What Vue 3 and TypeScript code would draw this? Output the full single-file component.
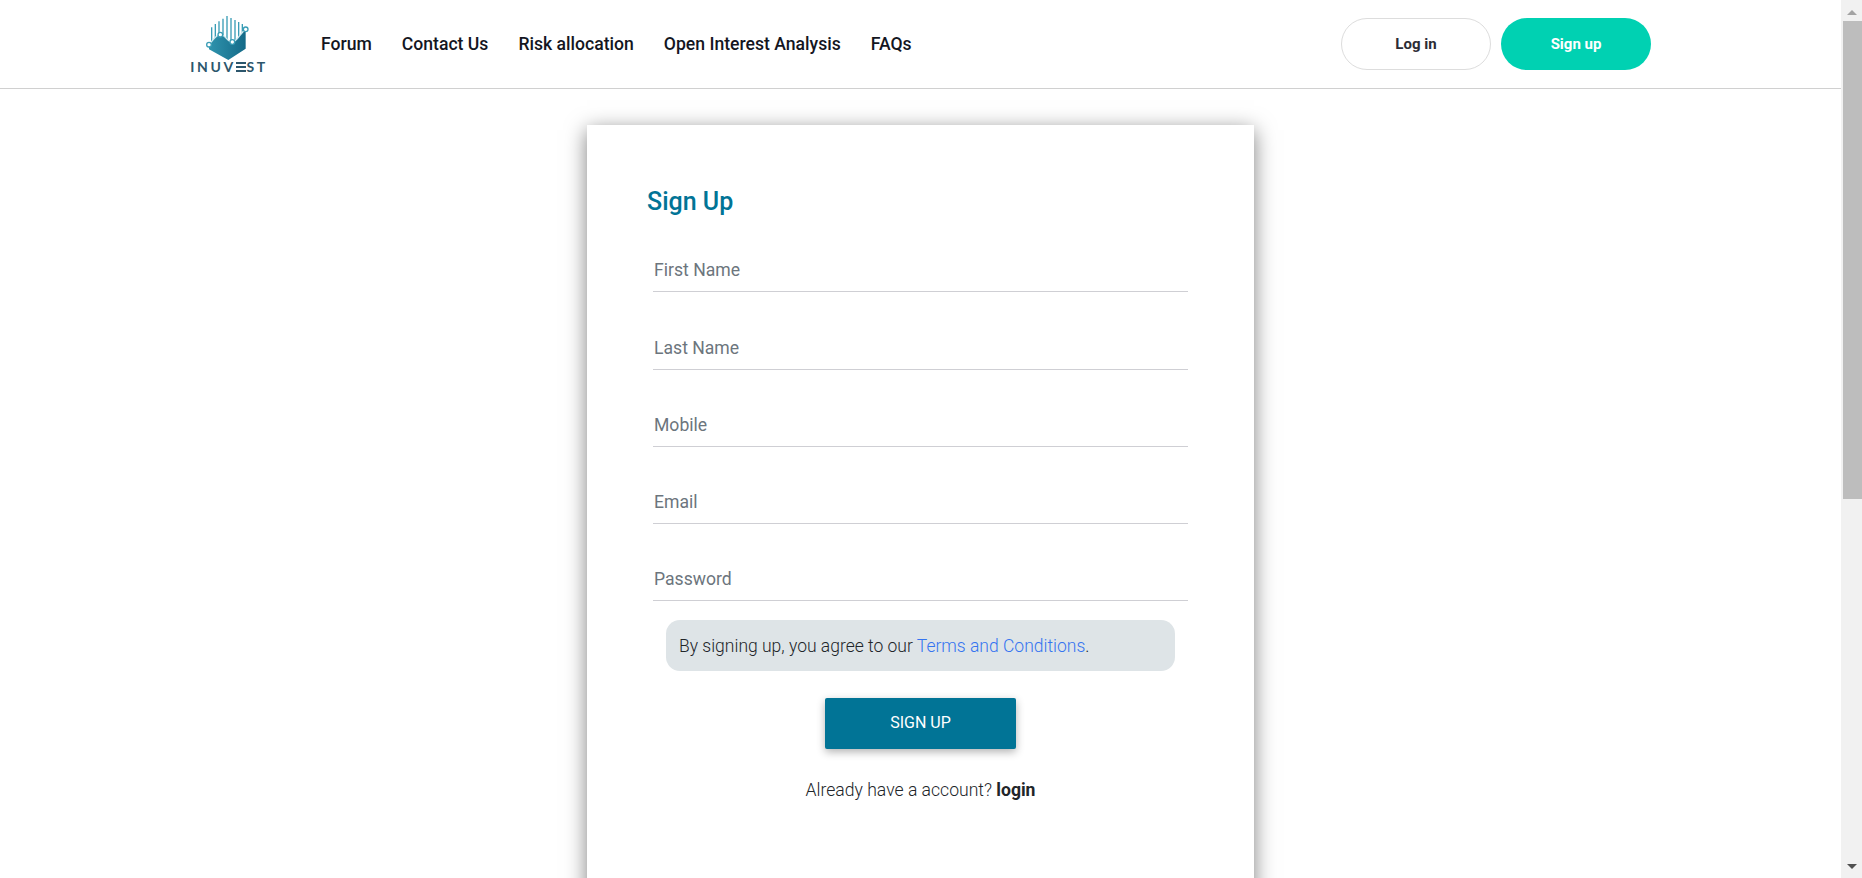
<template>
  <div class="page">
    <div class="main">
      <header class="topbar">
        <div class="logo">
          <svg class="logo-mark" width="60" height="50" viewBox="0 0 180 150" fill="none">
            <defs>
              <linearGradient id="hex" x1="0" y1="0" x2="1" y2="0">
                <stop offset="0" stop-color="#2f93ad" />
                <stop offset="1" stop-color="#146a88" />
              </linearGradient>
            </defs>
            <path v-for="bar in bars" :key="bar[0]" :d="barPath(bar)" stroke="#3a9db6" stroke-width="4" />
            <path d="M30 104 C42 92 50 74 64 74 C80 74 84 96 100 96 C115 96 122 70 140 58 V116 L88 150 L30 118 Z" fill="url(#hex)" />
            <path d="M30 104 C42 92 50 74 64 74 C80 74 84 96 100 96 C115 96 122 70 140 58" stroke="#cfe9ef" stroke-width="4" />
            <circle v-for="p in nodes" :key="p[0]" :cx="p[0]" :cy="p[1]" r="7" fill="#fff" stroke="#3a9db6" stroke-width="4" />
          </svg>
          <span class="logo-text">INUV<span class="logo-e">E</span>ST</span>
        </div>
        <nav class="nav">
          <a v-for="item in navItems" :key="item">{{ item }}</a>
        </nav>
        <div class="actions">
          <button class="btn-login">Log in</button>
          <button class="btn-signup">Sign up</button>
        </div>
      </header>

      <section class="card">
        <h2 class="title">Sign Up</h2>
        <form class="form" @submit.prevent>
          <div v-for="field in fields" :key="field" class="field">
            <input type="text" :placeholder="field" />
          </div>
          <p class="terms">By signing up, you agree to our <a>Terms and Conditions</a>.</p>
          <button class="submit">SIGN UP</button>
          <p class="switch">Already have a account? <b>login</b></p>
        </form>
      </section>
    </div>

    <aside class="scrollbar">
      <span class="arrow up"></span>
      <div class="track"><div class="thumb"></div></div>
      <span class="arrow down"></span>
    </aside>
  </div>
</template>

<script setup lang="ts">
const navItems = ['Forum', 'Contact Us', 'Risk allocation', 'Open Interest Analysis', 'FAQs']
const fields = ['First Name', 'Last Name', 'Mobile', 'Email', 'Password']

// logo bars as [x, top], tallest in the middle
const bars: [number, number][] = [
  [38, 52],
  [49, 42],
  [60, 34],
  [72, 26],
  [84, 18],
  [96, 24],
  [108, 30],
  [119, 36],
  [130, 42]
]
const nodes = [
  [30, 104],
  [64, 74],
  [100, 96],
  [140, 58]
]

const barPath = (bar: [number, number]) => `M${bar[0]} ${bar[1]} V110`
</script>

<style>
html,
body {
  margin: 0;
  overflow: hidden;
}
</style>

<style scoped>
.page {
  display: flex;
  height: 878px;
  overflow: hidden;
  background: #fff;
  font-family: Roboto, sans-serif;
  color: #212529;
}

.main {
  flex: 1;
  min-width: 0;
}

.topbar {
  display: flex;
  align-items: center;
  height: 88px;
  padding: 0 190px 0 190px;
  border-bottom: 1px solid #d0d0d0;
}

.logo {
  display: flex;
  flex-direction: column;
  align-items: center;
  align-self: flex-start;
  width: 78px;
  margin-right: 53px;
  padding-top: 10px;
}

.logo-mark {
  display: block;
}

.logo-text {
  margin-top: -1px;
  font-family: Lato, sans-serif;
  font-size: 14px;
  font-weight: 700;
  line-height: 16px;
  letter-spacing: 2.6px;
  color: #2c566c;
}

.logo-e {
  color: transparent;
  background: repeating-linear-gradient(#2c566c 0 2px, transparent 2px 4px) 0 4px / 100% 10px no-repeat;
}

.nav {
  display: flex;
  gap: 30px;
  flex: 1;
}

.nav a {
  font-size: 17.6px;
  font-weight: 500;
  color: #14161f;
}

.actions {
  display: flex;
  gap: 10px;
}

.actions button {
  width: 150px;
  height: 52px;
  border-radius: 26px;
  font-family: inherit;
  font-size: 15px;
  font-weight: 700;
}

.btn-login {
  background: #fff;
  border: 1px solid #ddd;
  color: #2c2c35;
}

.btn-signup {
  background: #00d1b2;
  border: 0;
  color: #fff;
}

.card {
  width: 667px;
  box-sizing: border-box;
  margin: 36px 0 0 587px;
  height: 800px;
  padding: 60px 66px 0 60px;
  background: #fff;
  box-shadow: 0 5px 20px rgba(0, 0, 0, 0.5);
}

.title {
  margin: 0;
  font-size: 25px;
  line-height: 34px;
  font-weight: 500;
  color: #017496;
}

.form {
  display: flex;
  flex-direction: column;
  align-items: center;
  margin-top: 21.3px;
}

.field {
  width: 535px;
  margin-left: 6px;
  margin-bottom: 25.25px;
}

.field:nth-child(5) {
  margin-bottom: 0;
}

.field input {
  display: block;
  width: 100%;
  box-sizing: border-box;
  height: 52px;
  padding: 9px 0 0 1px;
  border: 0;
  border-bottom: 1px solid #cfcfd4;
  outline: 0;
  font-family: inherit;
  font-size: 17.6px;
  background: transparent;
}

.field input::placeholder {
  color: #6c757d;
  opacity: 1;
}

.terms {
  box-sizing: border-box;
  width: 509px;
  height: 51px;
  margin: 18.7px 0 0 6px;
  padding: 2px 13px 0;
  border-radius: 14px;
  background: #dee4e7;
  font-size: 17.5px;
  font-weight: 300;
  line-height: 49px;
}

.terms a {
  color: #3574f0;
}

.submit {
  width: 191px;
  height: 51px;
  margin: 27px 0 0 6px;
  padding: 0 0 1px;
  border: 0;
  border-radius: 2px;
  background: #017496;
  color: #fff;
  font-family: inherit;
  font-size: 16px;
  font-weight: 400;
  box-shadow: 0 3px 8px rgba(0, 0, 0, 0.3);
}

.switch {
  margin: 28px 0 0 6px;
  font-size: 17.6px;
  font-weight: 300;
  line-height: 26px;
}

.switch b {
  font-weight: 700;
}

.scrollbar {
  display: flex;
  flex-direction: column;
  align-items: center;
  width: 21px;
  background: #f1f1f1;
}

.arrow {
  flex: none;
  width: 0;
  height: 0;
  border-left: 5px solid transparent;
  border-right: 5px solid transparent;
}

.arrow.up {
  margin: 10px 0 6px;
  border-bottom: 5px solid #a3a3a3;
}

.arrow.down {
  margin: 0 0 9px;
  border-top: 5px solid #505050;
}

.track {
  flex: 1;
  width: 100%;
}

.thumb {
  height: 478px;
  margin-left: 2px;
  background: #bdbdbd;
}
</style>
